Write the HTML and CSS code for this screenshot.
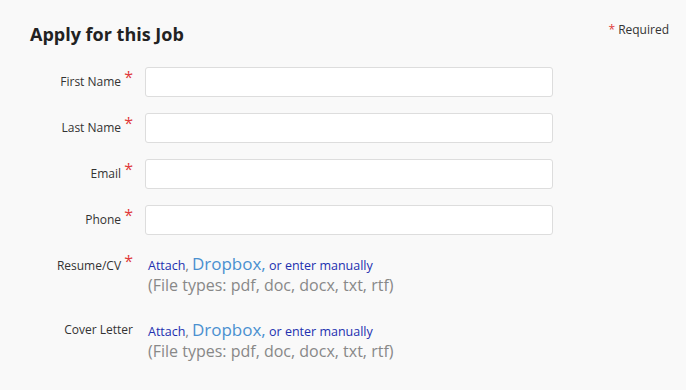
FILE: index.html
```html
<!DOCTYPE html>
<html lang="en">
<head>
    <meta charset="UTF-8">
    <meta name="viewport" content="width=device-width, initial-scale=1.0">
    <title>Apply for this Job</title>
    <link rel="stylesheet" href="styles.css">
</head>
<body>
    <div class="application">
        <div class="header">
            <h2>Apply for this Job</h2>
            <div class="required-note"><span class="asterisk">*</span> Required</div>
        </div>
        <form id="applicationForm">
            <div class="field">
                <label for="first_name">First Name <span class="asterisk">*</span></label>
                <input type="text" id="first_name" name="first_name">
            </div>
            <div class="field">
                <label for="last_name">Last Name <span class="asterisk">*</span></label>
                <input type="text" id="last_name" name="last_name">
            </div>
            <div class="field">
                <label for="email">Email <span class="asterisk">*</span></label>
                <input type="text" id="email" name="email">
            </div>
            <div class="field">
                <label for="phone">Phone <span class="asterisk">*</span></label>
                <input type="text" id="phone" name="phone">
            </div>
            <div class="field attachment">
                <label>Resume/CV <span class="asterisk">*</span></label>
                <div class="attach-options">
                    <div class="links"><a href="#">Attach</a>, <a href="#" class="dropbox">Dropbox,</a> <a href="#">or enter manually</a></div>
                    <div class="file-types">(File types: pdf, doc, docx, txt, rtf)</div>
                </div>
            </div>
            <div class="field attachment">
                <label>Cover Letter</label>
                <div class="attach-options">
                    <div class="links"><a href="#">Attach</a>, <a href="#" class="dropbox">Dropbox,</a> <a href="#">or enter manually</a></div>
                    <div class="file-types">(File types: pdf, doc, docx, txt, rtf)</div>
                </div>
            </div>
        </form>
    </div>
</body>
</html>
```

FILE: styles.css
```css
body {
    font-family: "Open Sans", Arial, sans-serif;
    margin: 0;
    padding: 0;
    background-color: #f9f9f9;
    color: #333;
}
.application {
    padding: 20px 17px 0 0;
}
.header {
    display: flex;
    justify-content: space-between;
    align-items: flex-start;
    padding-left: 30px;
}
h2 {
    margin: 0;
    font-size: 18px;
    font-weight: bold;
    color: #222;
    line-height: 28px;
}
.required-note {
    font-size: 12px;
    color: #333;
    line-height: 20px;
}
.asterisk {
    color: #e03a3a;
    font-size: 16px;
    position: relative;
    top: -3px;
}
.required-note .asterisk {
    font-size: 12px;
    top: 0;
}
#applicationForm {
    margin-top: 19px;
}
.field {
    display: flex;
    align-items: center;
    margin-bottom: 16px;
}
.field label {
    flex: 0 0 145px;
    padding: 0 12px 4px 0;
    text-align: right;
    font-size: 12px;
    color: #333;
    box-sizing: border-box;
}
.field input {
    width: 408px;
    height: 30px;
    border: 1px solid #ddd;
    border-radius: 3px;
    background: #fff;
    box-sizing: border-box;
}
.attachment {
    align-items: flex-start;
    margin-top: 20px;
    margin-bottom: 0;
}
.attachment + .attachment {
    margin-top: 26px;
}
.attachment label {
    line-height: 18px;
    padding-bottom: 0;
}
.attach-options {
    padding-left: 3px;
}
.links {
    font-size: 12.5px;
    line-height: 18px;
    color: #777;
}
.links a {
    color: #2230b0;
    text-decoration: none;
}
.links a.dropbox {
    color: #4a90d0;
    font-size: 17px;
}
.file-types {
    font-size: 16px;
    color: #888;
    line-height: 20px;
}
```
